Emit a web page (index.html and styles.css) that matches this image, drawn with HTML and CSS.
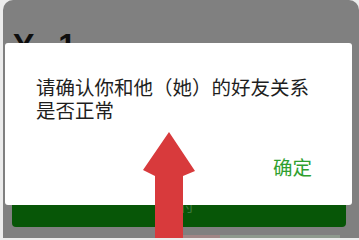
FILE: index.html
```html
<!DOCTYPE html>
<html lang="zh">
<head>
<meta charset="utf-8">
<title>确认好友关系</title>
<link rel="stylesheet" href="styles.css">
</head>
<body>
<div class="screen">
  <div class="header"><span class="amt-a">Y</span><span class="amt-b">1</span></div>
  <div class="dialog">
    <p class="message"><span class="line">请确认你和他（她）的好友关系</span><span class="line">是否正常</span></p>
    <div class="actions"><span class="ok">确定</span></div>
  </div>
  <div class="pay-bar"><span class="pay-label">支付</span></div>
  <div class="bottom-strip"><span class="hint-red"></span><span class="hint-light"></span></div>
</div>
<svg class="arrow" width="359" height="238" viewBox="0 0 359 238">
  <polygon points="169,132 195,171 183,176 183,238 155,238 155,176 143,170" fill="#d83a3c"/>
</svg>
</body>
</html>
```
FILE: styles.css
```css
html, body {
  margin: 0;
  padding: 0;
}
body {
  width: 359px;
  height: 238px;
  overflow: hidden;
  background: #ececec;
  position: relative;
  font-family: "Noto Sans CJK SC", "Noto Sans", sans-serif;
}
.screen {
  margin-left: 3px;
  width: 356px;
  height: 238px;
  background: #808080;
  border-radius: 10px 10px 0 0;
  display: flex;
  flex-direction: column;
  overflow: hidden;
}
.header {
  height: 43px;
  box-sizing: border-box;
  padding: 29px 0 0 10px;
  overflow: hidden;
  font-family: "Liberation Sans", Arial, sans-serif;
  font-weight: bold;
  font-size: 32px;
  line-height: 32px;
  color: #0e0e0e;
  display: flex;
  gap: 24px;
}
.dialog {
  margin-left: 2px;
  width: 347px;
  height: 162px;
  box-sizing: border-box;
  background: #ffffff;
  border-radius: 3px;
  padding: 32px 40px 0 31px;
  display: flex;
  flex-direction: column;
}
.message {
  margin: 0;
  font-size: 19.5px;
  line-height: 23px;
  color: #1e1e1e;
  white-space: nowrap;
  display: flex;
  flex-direction: column;
}
.line {
  display: block;
  height: 23px;
}
.actions {
  margin-top: 34px;
  display: flex;
  justify-content: flex-end;
}
.ok {
  font-size: 19.5px;
  line-height: 23px;
  color: #2f9f2f;
}
.pay-bar {
  margin-left: 9px;
  width: 334px;
  height: 22px;
  background: #075607;
  border-radius: 0 0 4px 4px;
  display: flex;
  justify-content: center;
  align-items: flex-start;
  overflow: hidden;
}
.pay-label {
  font-size: 14px;
  line-height: 8px;
  color: #3f7a3f;
  margin-top: -4px;
  padding-left: 2px;
}
.bottom-strip {
  flex: 1;
  display: flex;
  align-items: flex-end;
  padding-left: 180px;
}
.hint-red {
  width: 37px;
  height: 3px;
  background: #a08686;
}
.hint-light {
  width: 120px;
  height: 3px;
  background: #8e9a8e;
}
.arrow {
  position: absolute;
  left: 0;
  top: 0;
}
```
